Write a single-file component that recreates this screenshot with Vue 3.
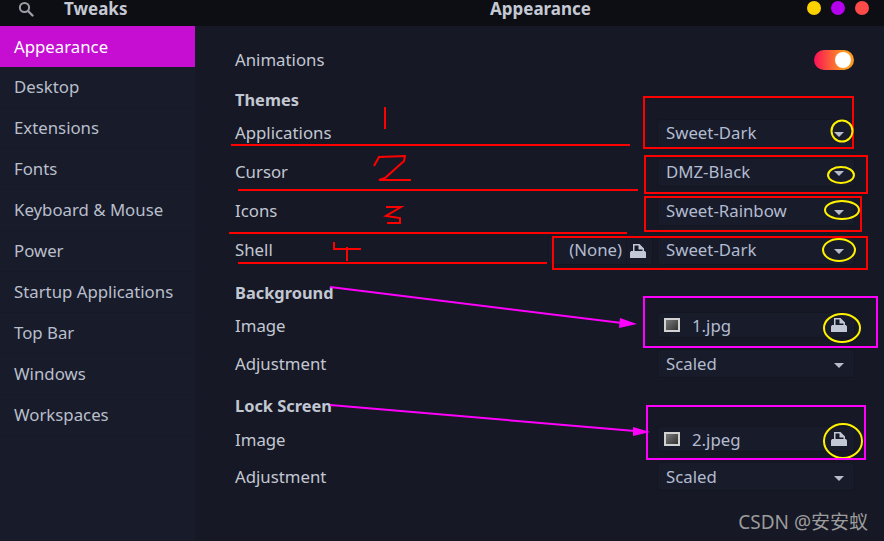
<template>
  <div class="window">
    <header class="titlebar">
      <div class="title-left">
        <svg class="search" width="16" height="16" viewBox="0 0 16 16">
          <circle cx="6.5" cy="6.5" r="4.6" fill="none" stroke="#9b9ea6" stroke-width="2" />
          <path d="M10 10l4.5 4.5" stroke="#9b9ea6" stroke-width="2.4" stroke-linecap="round" />
        </svg>
        <span class="app-name">Tweaks</span>
      </div>
      <div class="page-title">Appearance</div>
      <div class="dots">
        <span class="dot yellow"></span>
        <span class="dot purple"></span>
        <span class="dot red"></span>
      </div>
    </header>

    <div class="body">
      <nav class="sidebar">
        <div v-for="item in navItems" :key="item" class="nav-item" :class="{ active: item === 'Appearance' }">
          {{ item }}
        </div>
      </nav>

      <main class="content">
        <div class="row">
          <span class="label">Animations</span>
          <div class="toggle"><span class="knob"></span></div>
        </div>

        <h4 class="heading themes">Themes</h4>
        <div class="theme-rows">
          <div v-for="t in themes" :key="t.label" class="row">
            <span class="label">{{ t.label }}</span>
            <div class="controls">
              <div v-if="t.file" class="file-btn">
                <span class="file-name">{{ t.file }}</span>
                <span class="file-icon">
                  <svg width="16" height="16" viewBox="0 0 16 16"><path :d="openIcon" fill="#c3c8d6" fill-rule="evenodd" /></svg>
                </span>
              </div>
              <div class="combo">
                <span>{{ t.value }}</span>
                <i class="arrow"></i>
              </div>
            </div>
          </div>
        </div>

        <section v-for="s in imageSections" :key="s.title" :class="s.cls">
          <h4 class="heading">{{ s.title }}</h4>
          <div class="row image-row">
            <span class="label">Image</span>
            <div class="combo picker">
              <span class="thumb"></span>
              <span class="picker-name">{{ s.file }}</span>
              <svg class="picker-icon" width="16" height="16" viewBox="0 0 16 16"><path :d="openIcon" fill="#c3c8d6" fill-rule="evenodd" /></svg>
            </div>
          </div>
          <div class="row adjust-row">
            <span class="label">Adjustment</span>
            <div class="combo">
              <span>Scaled</span>
              <i class="arrow"></i>
            </div>
          </div>
        </section>
      </main>
    </div>

    <!-- hand drawn notes on top of the screenshot -->
    <svg class="notes" width="884" height="541" viewBox="0 0 884 541">
      <g fill="none" stroke="#f00" stroke-width="2">
        <rect x="644" y="97" width="209" height="51" />
        <rect x="645" y="156" width="222" height="37" />
        <rect x="645" y="197" width="216" height="34" />
        <rect x="553" y="237" width="314" height="32" />
        <path d="M231 145H630M238 190H638M229 233H627M238 263H547" />
        <path d="M385 107V129" />
        <path d="M374 166L379 157L405 156L404 161L385 178L379 180H411" />
        <path d="M386 207H401L386 216L400 218V223H387" />
        <path d="M334 242V249H361M347 247V261" />
      </g>
      <g fill="none" stroke="#fff200" stroke-width="2">
        <ellipse cx="842" cy="131" rx="10.5" ry="10.5" />
        <ellipse cx="841" cy="175" rx="13" ry="8" />
        <ellipse cx="842" cy="210" rx="17" ry="9" />
        <ellipse cx="839" cy="250" rx="16" ry="11" />
        <ellipse cx="842" cy="328" rx="18" ry="14" />
        <ellipse cx="843" cy="441" rx="19" ry="17" />
      </g>
      <g fill="none" stroke="#f0f" stroke-width="2">
        <rect x="644" y="297" width="233" height="50" />
        <rect x="647" y="406" width="218" height="53" />
        <path d="M330 287L622 323M330 405L635 431" />
      </g>
      <path d="M637 324L620 318L619 328ZM650 432L633 427L633 436Z" fill="#f0f" />
    </svg>

    <div class="watermark">CSDN @安安蚁</div>
  </div>
</template>

<script setup>
const navItems = [
  'Appearance',
  'Desktop',
  'Extensions',
  'Fonts',
  'Keyboard & Mouse',
  'Power',
  'Startup Applications',
  'Top Bar',
  'Windows',
  'Workspaces',
];

const themes = [
  { label: 'Applications', value: 'Sweet-Dark' },
  { label: 'Cursor', value: 'DMZ-Black' },
  { label: 'Icons', value: 'Sweet-Rainbow' },
  { label: 'Shell', value: 'Sweet-Dark', file: '(None)' },
];

const imageSections = [
  { title: 'Background', file: '1.jpg', cls: 'bg-section' },
  { title: 'Lock Screen', file: '2.jpeg', cls: 'lock-section' },
];

// document-open symbolic
const openIcon = 'M3 1H9.5L14 5.5V8H15L16 9.5V15H0V9.5L1 8H3ZM4.5 2.5V8H12.5V6.5H8.5V2.5Z';
</script>

<style>
html, body {
  margin: 0;
  background: #161825;
}
</style>

<style scoped>
.window {
  position: relative;
  width: 884px;
  height: 541px;
  overflow: hidden;
  display: flex;
  flex-direction: column;
  font-family: "Noto Sans", "Liberation Sans", sans-serif;
  font-size: 16.8px;
  color: #c2c7d2;
  background: #161825;
}

.titlebar {
  height: 26px;
  flex: none;
  display: flex;
  align-items: flex-start;
  background: #0d0e13;
  font-weight: 700;
  font-size: 17px;
  line-height: 18px;
}

.title-left {
  width: 196px;
  display: flex;
  align-items: center;
  height: 18px;
  padding-left: 18px;
  box-sizing: border-box;
}

.search {
  margin-right: 30px;
}

.app-name {
  color: #c4c9d4;
}

.page-title {
  flex: 1;
  height: 18px;
  padding-left: 78px;
  text-align: center;
  color: #c4c9d4;
}

.dots {
  display: flex;
  gap: 10px;
  padding: 1px 15px 0 0;
}

.dot {
  width: 14px;
  height: 14px;
  border-radius: 50%;
}

.yellow { background: #fed200; }
.purple { background: #b400ee; }
.red { background: #ff4a4a; }

.body {
  flex: 1;
  display: flex;
}

.sidebar {
  width: 196px;
  flex: none;
  background: #181b29;
  border-right: 1px solid #171926;
  box-sizing: border-box;
}

.nav-item {
  height: 41px;
  line-height: 39px;
  padding-left: 14px;
  box-sizing: border-box;
  border-bottom: 1px solid #171926;
  color: #b9bfcc;
}

.nav-item.active {
  background: #c50ed2;
  border-bottom: 0;
  line-height: 41px;
  color: #fff;
}

.content {
  flex: 1;
  padding: 19px 29px 0 39px;
}

.row {
  height: 29px;
  display: flex;
  align-items: center;
  justify-content: space-between;
}

.label {
  color: #c2c7d2;
}

.heading {
  margin: 18px 0 0;
  height: 20px;
  line-height: 20px;
  font-size: 16.4px;
  font-weight: 700;
  color: #c2c7d2;
}

.themes {
  margin: 16px 0 9px;
}

.theme-rows {
  display: flex;
  flex-direction: column;
  gap: 10px;
  margin-bottom: 1px;
}

.theme-rows .label,
.theme-rows .combo {
  padding-bottom: 2px;
}

.toggle {
  width: 40px;
  height: 20px;
  margin-right: 1px;
  border-radius: 10px;
  background: linear-gradient(90deg, #fb1158, #fd9a1f 75%);
  display: flex;
  align-items: center;
  justify-content: flex-end;
  padding-right: 3px;
  box-sizing: border-box;
}

.knob {
  width: 16px;
  height: 16px;
  border-radius: 50%;
  background: #fff;
}

.controls {
  display: flex;
  gap: 4px;
}

.combo {
  width: 198px;
  height: 29px;
  box-sizing: border-box;
  display: flex;
  align-items: center;
  justify-content: space-between;
  padding: 0 10px 0 8px;
  background: #181b2a;
  border: 1px solid #131520;
  border-radius: 4px;
  color: #b3bbd0;
}

.arrow {
  width: 0;
  height: 0;
  border-left: 5px solid transparent;
  border-right: 5px solid transparent;
  border-top: 5px solid #b9bdca;
  margin-top: 3px;
}

.file-btn {
  width: 105px;
  height: 29px;
  box-sizing: border-box;
  display: flex;
  align-items: center;
  justify-content: flex-end;
  background: #181b2a;
  border: 1px solid #131520;
  border-radius: 4px;
  color: #b3bbd0;
}

.file-name {
  padding-right: 4px;
  padding-bottom: 2px;
}

.file-icon {
  width: 26px;
  height: 100%;
  display: flex;
  align-items: center;
  border-left: 1px solid #151722;
  padding-left: 3px;
  box-sizing: border-box;
}

.image-row {
  height: 26px;
  margin-top: 9px;
}

.lock-section .image-row {
  margin-top: 10px;
}

.adjust-row {
  margin-top: 11px;
}

.lock-section .adjust-row {
  margin-top: 10px;
}

.picker {
  height: 26px;
  justify-content: flex-start;
  padding: 0 7px 0 6px;
}

.thumb {
  width: 16px;
  height: 14px;
  box-sizing: border-box;
  border: 2px solid #d2d2d2;
  background: linear-gradient(135deg, #7a7a7a, #333);
  margin-right: 12px;
}

.picker-name {
  flex: 1;
}

.notes {
  position: absolute;
  top: 0;
  left: 0;
  pointer-events: none;
}

.watermark {
  position: absolute;
  right: 16px;
  bottom: 6px;
  font-family: "Noto Sans", "Noto Sans CJK SC", sans-serif;
  font-size: 19px;
  color: #9c9c9c;
}
</style>
